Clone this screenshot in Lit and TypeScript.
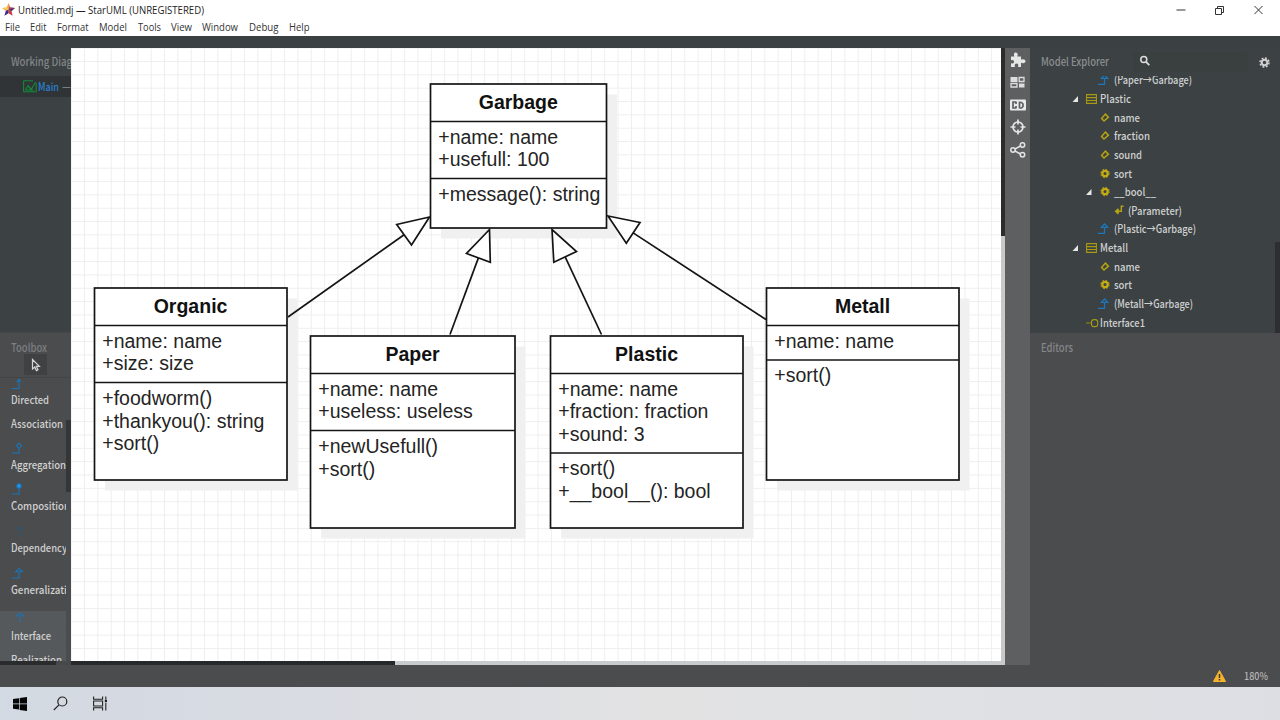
import { LitElement, html, svg, css } from "lit";
import { customElement } from "lit/decorators.js";

type Box = {
  x: number; y: number; w: number; h: number; name: string;
  attrs: string[]; ops: string[]; d1: number; d2: number;
};

const boxes: Box[] = [
  { x: 430.5, y: 84, w: 176, h: 144, name: "Garbage", attrs: ["+name: name", "+usefull: 100"], ops: ["+message(): string"], d1: 37.5, d2: 94.5 },
  { x: 94.5, y: 288, w: 192.5, h: 192, name: "Organic", attrs: ["+name: name", "+size: size"], ops: ["+foodworm()", "+thankyou(): string", "+sort()"], d1: 37.5, d2: 94.5 },
  { x: 310.5, y: 336, w: 204.5, h: 192, name: "Paper", attrs: ["+name: name", "+useless: useless"], ops: ["+newUsefull()", "+sort()"], d1: 37.5, d2: 94.5 },
  { x: 550.5, y: 336, w: 192.5, h: 192, name: "Plastic", attrs: ["+name: name", "+fraction: fraction", "+sound: 3"], ops: ["+sort()", "+__bool__(): bool"], d1: 37.5, d2: 117 },
  { x: 766.5, y: 288, w: 192.5, h: 192, name: "Metall", attrs: ["+name: name"], ops: ["+sort()"], d1: 37.5, d2: 72 },
];

const arrows = [
  { tip: [429.5, 217], a: [396.7, 224.5], b: [411.5, 245], from: [288, 317] },
  { tip: [489.5, 229.5], a: [466.5, 253.5], b: [490.3, 262.3], from: [450, 334.5] },
  { tip: [552, 229.5], a: [553.8, 262.3], b: [576.5, 251.5], from: [601.5, 334.5] },
  { tip: [608, 216], a: [640, 222.5], b: [626.3, 243.3], from: [766, 319.5] },
];

const boxView = (b: Box) => svg`
  <rect x=${b.x + 10.5} y=${b.y + 10.5} width=${b.w} height=${b.h} fill="#f0f0f0"/>
  <rect x=${b.x} y=${b.y} width=${b.w} height=${b.h} fill="#fff" class="ink"/>
  <path class="ink" d="M${b.x} ${b.y + b.d1}h${b.w}M${b.x} ${b.y + b.d2}h${b.w}"/>
  <text class="cls" x=${b.x + b.w / 2 - 0.2} y=${b.y + 24.7} text-anchor="middle">${b.name}</text>
  ${b.attrs.map((t, i) => svg`<text class="mem" x=${b.x + 7.8} y=${b.y + 59.7 + i * 22.6}>${t}</text>`)}
  ${b.ops.map((t, i) => svg`<text class="mem" x=${b.x + 7.8} y=${b.y + b.d2 + 22.4 + i * 22.6}>${t}</text>`)}`;

const arrowView = (r: { tip: number[]; a: number[]; b: number[]; from: number[] }) => svg`
  <path class="ink" d="M${(r.a[0] + r.b[0]) / 2} ${(r.a[1] + r.b[1]) / 2}L${r.from[0]} ${r.from[1]}"/>
  <path class="ink" fill="#fff" d="M${r.tip[0]} ${r.tip[1]}L${r.a[0]} ${r.a[1]}L${r.b[0]} ${r.b[1]}Z"/>`;

const star = html`<svg viewBox="0 0 20 20" width="100%" height="100%">
  <path fill="#f4b22e" d="M10 0L7.3 6.8 0 7.6 5.8 12 10 10.5z"/>
  <path fill="#e2552f" d="M10 0l2.6 6.8L10 10.5z"/>
  <path fill="#f9d55e" d="M0 7.6l7.3-.8L10 10.5z"/>
  <path fill="#3b2a6b" d="M20 7.6l-7.4-.8L10 10.5l4.5 2z"/>
  <path fill="#a13a5c" d="M20 7.6l-10 3 2.6-3.8z"/>
  <path fill="#cf3a3a" d="M16.3 19.6l-1.8-7.2L10 10.5v5.2z"/>
  <path fill="#43298c" d="M3.8 19.6l2-7.6L10 10.5v5.2z"/>
</svg>`;

const glyphs: Record<string, unknown> = {
  attr: svg`<path d="M6 2.2l3 3-4.4 3.9-2.4-2.6z" transform="translate(-.6 -.6)" stroke="#b5a410" stroke-width="1.5" fill="none"/>`,
  op: svg`<circle cx="5" cy="5" r="2.7" fill="none" stroke="#c4ac12" stroke-width="2.3"/><circle cx="5" cy="5" r="4.2" fill="none" stroke="#c4ac12" stroke-width="1" stroke-dasharray="1.7 1.6"/>`,
  param: svg`<path d="M9.5 .8H7.3V5.8H2M4.4 3.3L1.6 5.8l2.8 2.6M4.2 4v3.5" stroke="#b5a410" stroke-width="1.4" fill="none"/>`,
  cls: svg`<path d="M.6 .6h9.8v8.8H.6zM.6 3.6h9.8M.6 6.5h9.8" stroke="#a89a12" stroke-width="1.1" fill="none"/>`,
  iface: svg`<path d="M0 5h5.5" stroke="#8d8217" stroke-width="1.1"/><rect x="5.5" y="1.6" width="6.2" height="7" rx="2.4" fill="none" stroke="#a89a12" stroke-width="1.1"/>`,
  gen: svg`<path d="M0 10.4h7.5V4.5M4.4 4.4L7.6 1l3.2 3.4z" stroke="#1b78bd" stroke-width="1.2" fill="none"/>`,
};

const tree = [
  { pad: 71, icon: "gen", text: "(Paper→Garbage)", w: 78 },
  { pad: 57, icon: "cls", text: "Plastic", open: true, w: 31 },
  { pad: 71, icon: "attr", text: "name", w: 26 },
  { pad: 71, icon: "attr", text: "fraction", w: 36 },
  { pad: 71, icon: "attr", text: "sound", w: 28 },
  { pad: 71, icon: "op", text: "sort", w: 18 },
  { pad: 71, icon: "op", text: "__bool__", open: true, w: 42 },
  { pad: 84.5, icon: "param", text: "(Parameter)", w: 54 },
  { pad: 71, icon: "gen", text: "(Plastic→Garbage)", w: 82 },
  { pad: 57, icon: "cls", text: "Metall", open: true, w: 28 },
  { pad: 71, icon: "attr", text: "name", w: 26 },
  { pad: 71, icon: "op", text: "sort", w: 18 },
  { pad: 71, icon: "gen", text: "(Metall→Garbage)", w: 79 },
  { pad: 57, icon: "iface", text: "Interface1", w: 45 },
];

// Single-line label fitted to a fixed advance width.
const label = (text: string, w: number, size: number, fill: string, font: "ui" | "win" = "ui", h = 18) =>
  html`<svg class="label ${font}" width=${w + 2} height=${h} font-size=${size}><text x="0" y=${h / 2 + size * 0.35} fill=${fill} textLength=${w} lengthAdjust="spacingAndGlyphs">${text}</text></svg>`;

const relIcon = (kind: string) => html`<svg class="rel" width="14" height="12" viewBox="0 0 14 12">
  <g stroke="#1b74b8" fill="none" stroke-width="1.1">
  ${kind === "directed" ? svg`<path d="M1 10.5h7V1.5M5.5 3.8L8 1.3l2 2.2"/>` : ""}
  ${kind === "aggregation" ? svg`<path d="M1 11h7V6.5M8 1l2.4 2.8L8 6.6 5.6 3.8z"/>` : ""}
  ${kind === "composition" ? svg`<path d="M1 11h7V4"/><circle cx="8" cy="3" r="2.2" fill="#2796e8"/>` : ""}
  ${kind === "dependency" ? svg`<path stroke="#23577c" d="M9 11V2M6 4.6L9 1.8l3 2.8" stroke-dasharray="3 1"/>` : ""}
  ${kind === "generalization" ? svg`<path d="M1 11h7V5M4.6 4.8h7L8.1 1.4z"/>` : ""}
  ${kind === "realization" ? svg`<path d="M5.6 5h7L9 1.8zM9 6v6" stroke-dasharray="5 1.2"/>` : ""}
  </g></svg>`;

const tools: { kind: string; lines: [string, number][]; cls: string }[] = [
  { kind: "directed", lines: [["Directed", 38], ["Association", 52]], cls: "t0" },
  { kind: "aggregation", lines: [["Aggregation", 55]], cls: "t1" },
  { kind: "composition", lines: [["Composition", 59]], cls: "t1" },
  { kind: "dependency", lines: [["Dependency", 56]], cls: "t1" },
  { kind: "generalization", lines: [["Generalization", 68]], cls: "t1" },
  { kind: "realization", lines: [["Interface", 40], ["Realization", 51]], cls: "t2" },
];

@customElement("app-root")
export class AppRoot extends LitElement {
  static styles = css`
    :host { display: flex; flex-direction: column; width: 1280px; height: 720px; overflow: hidden; background: #fff; font-family: "Noto Sans CJK SC", "Open Sans", sans-serif; }
    * { box-sizing: border-box; }
    svg { display: block; flex: none; }
    .label { overflow: visible; }
    .ui { font-family: "Noto Sans CJK SC", sans-serif; font-weight: 500; }
    .win { font-family: "Open Sans", "Noto Sans", sans-serif; }
    .title { height: 19px; display: flex; align-items: center; padding-left: 2px; background: #fff; flex: none; }
    .logo { width: 13px; height: 13px; margin-right: 3px; }
    .winctl { margin-left: auto; margin-right: 15px; }
    .menu { height: 17px; display: flex; align-items: center; background: #fff; flex: none; padding-left: 5px; }
    .menu .label { margin-right: 8.4px; }
    .topbar { height: 12px; background: #3b4042; flex: none; }
    .work { height: 617px; display: grid; grid-template-columns: 71px 934px 25px 250px; flex: none; background: #3b4042; }
    .left { display: flex; flex-direction: column; overflow: hidden; background: #3c4143; min-width: 0; height: 617px; }
    .wd { height: 28px; padding: 5px 0 0 11px; flex: none; }
    .main { height: 21px; background: #303436; display: flex; align-items: center; padding-left: 23px; gap: 1px; flex: none; }
    .toolbox { margin-top: 235px; flex: 1; display: grid; grid-template-columns: 66px 5px; grid-template-rows: 46px 283px 4px; background: #4b4c4e; }
    .tbhead { grid-column: 1 / 3; padding: 6px 0 0 11px; border-bottom: 1px solid #434446; border-top: 1px solid #454749; }
    .pick { width: 23px; height: 21px; background: #404143; margin: -3px 0 0 13px; padding: 4px 0 0 7px; }
    .items { overflow: hidden; height: 283px; }
    .item { padding-left: 11px; height: 41.7px; }
    .item .label { overflow: visible; }
    .t0 { height: 63.5px; }
    .t2 { height: 62px; background: #56595c; margin-top: -1px; }
    .rel { height: 12px; }
    .t0 .label { margin-top: 1px; height: 22.5px; }
    .t1 .label { margin-top: 2px; }
    .t1 .rel { margin-top: 0; }
    .t2 .rel { margin-top: 4px; }
    .t2 .label { margin-top: 4px; height: 19.5px; }
    .vtrack { padding-top: 42px; background: #4b4c4e; }
    .vthumb { height: 72px; background: #343638; }
    .lh { grid-column: 1 / 3; background: #46484a; }
    .lh div { width: 56px; height: 4px; background: #292b2c; }
    .canvas { display: grid; grid-template-columns: 930px 4px; grid-template-rows: 613px 4px; }
    .vs { background: #c9c9c9; }
    .vs div { height: 188px; background: #2c2c2d; }
    .hs { grid-column: 1 / 3; background: #c9cacb; }
    .hs div { width: 324px; height: 4px; background: #26282a; }
    .ink { stroke: #141414; stroke-width: 1.7; }
    .cls { font: bold 19.5px "Liberation Sans", Arial, sans-serif; fill: #111; }
    .mem { font: 19.5px "Liberation Sans", Arial, sans-serif; fill: #242424; }
    .strip { background: #5e5f61; display: flex; flex-direction: column; align-items: center; padding-top: 4px; gap: 6.4px; }
    .right { display: flex; flex-direction: column; min-width: 0; background: #3c4143; }
    .rhead { height: 28px; display: flex; align-items: center; padding: 0 10px 0 11px; flex: none; }
    .search { width: 115px; height: 20px; margin-left: 22px; background: #3a3f40; border-radius: 4px; padding: 3px 0 0 6px; }
    .gear { margin-left: auto; }
    .tree { height: 256.5px; overflow: hidden; display: grid; grid-template-columns: 245px 5px; flex: none; }
    .rows { margin-top: -5px; }
    .row { height: 18.65px; display: flex; align-items: center; }
    .tw { width: 7px; margin-right: 0; }
    .ic { width: 13px; display: flex; justify-content: flex-end; }
    .rthumb { margin-top: 166px; height: 91px; background: #2c2e30; }
    .editors { flex: 1; background: #4b4c4e; padding: 6px 0 0 11px; }
    .status { height: 22px; background: #4b4c4e; flex: none; display: flex; align-items: center; justify-content: flex-end; padding-right: 10px; gap: 18px; }
    .bar { height: 33px; flex: none; display: flex; background: linear-gradient(90deg, #d3d9e2 0, #d9dce2 330px, #e2e2e3 650px, #e0e1e3 900px, #dcdee4 1280px); }
    .app { width: 41.3px; height: 33px; display: flex; justify-content: center; align-items: center; border-bottom: 0 solid #0f70c4; flex: none; }
    .start { width: 40px; }
    .search-b { width: 40px; }
    .tv { width: 40px; }
    .gap { width: 4px; }
    .run { border-bottom-width: 3px; border-image: linear-gradient(90deg, transparent 3.5px, #0f70c4 3.5px, #0f70c4 calc(100% - 3.5px), transparent calc(100% - 3.5px)) 3; }
    .alert { background: #f8ad78; border-bottom: 3px solid #f0730a; }
    .active { background: linear-gradient(#f4f4f5, #f4f4f5); }
    .tray { margin-left: auto; display: flex; align-items: center; height: 33px; }
    .clock { width: 48px; display: flex; flex-direction: column; align-items: center; margin: 0 17px 0 12px; }
    .sp { width: 20px; display: flex; justify-content: center; }
    .lang { margin-left: 6px; }
    .peek { width: 1px; height: 33px; background: #b5b8bf; margin-left: 16px; margin-right: 3px; }
  `;

  private menu: [string, number][] = [["File", 15], ["Edit", 16.5], ["Format", 31.5], ["Model", 28], ["Tools", 23], ["View", 21], ["Window", 36], ["Debug", 29.5], ["Help", 20.5]];

  render() {
    return html`
      <div class="title"><div class="logo">${star}</div>${label("Untitled.mdj — StarUML (UNREGISTERED)", 186, 10, "#222", "win")}
        <svg class="winctl" width="90" height="14" viewBox="0 0 90 14"><g stroke="#333" fill="none"><path d="M1.5 7h9"/><path d="M40.500 5.500h6v6h-6zM42.500 5.500v-2h6v6h-2"/><path d="M79.500 3l8 8m0-8l-8 8"/></g></svg></div>
      <div class="menu">${this.menu.map(([t, w]) => label(t, w, 10, "#333", "win", 17))}</div>
      <div class="topbar"></div>
      <div class="work">
        ${this.left()}
        <div class="canvas">
          <svg width="930" height="613" viewBox="71 48 930 613">
            <defs><pattern id="grid" x="84.000" y="61.000" width="13.340" height="13.340" patternUnits="userSpaceOnUse"><path d="M.5 0V13.340M0 .5H13.340" stroke="#eeeeee" stroke-width="1" fill="none"/></pattern></defs>
            <rect x="71" y="48" width="930" height="613" fill="#fff"/>
            <rect x="71" y="48" width="930" height="613" fill="url(#grid)"/>
            ${boxes.map(boxView)}${arrows.map(arrowView)}
          </svg>
          <div class="vs"><div></div></div>
          <div class="hs"><div></div></div>
        </div>
        ${this.strip()}
        ${this.right()}
      </div>
      <div class="status">
        <svg width="13" height="12" viewBox="0 0 13 12"><path d="M6.500 .5L12.600 11.500H.4z" fill="#f5b32c" stroke="#f5b32c" stroke-linejoin="round"/><path d="M6.500 4v4m0 1v1.500" stroke="#3c3a30" stroke-width="1.500"/></svg>
        ${label("180%", 24, 10.5, "#b5b5b5")}
      </div>
      ${this.taskbar()}
    `;
  }

  private left() {
    return html`<div class="left">
      <div class="wd">${label("Working Diagrams", 84, 11.5, "#828687")}</div>
      <div class="main"><svg width="14" height="13" viewBox="0 0 14 13"><path d="M.6 .8h9.400M.6 .8v11h12.600V3M2.500 10L5 5.500l3 4.500 4.500-8M5 5.500l4 4.500M2.500 10h8" stroke="#118a38" fill="none" stroke-width="1.100"/></svg>
        ${label("Main", 21, 11, "#2b7fd0")}${label("— Model", 40, 11, "#8d9192")}</div>
      <div class="toolbox">
        <div class="tbhead">${label("Toolbox", 36, 11.5, "#7d7f81")}
          <div class="pick"><svg width="10" height="14" viewBox="0 0 10 14"><path d="M1.500 1.500v9.500l2.300-2 1.600 3.600 1.600-.8-1.600-3.400h3z" fill="none" stroke="#d5d5d5" stroke-width="1.200"/></svg></div></div>
        <div class="items">${tools.map(t => html`<div class="item ${t.cls}">${relIcon(t.kind)}${t.lines.map(([s, w]) => label(s, w, 11, "#d0d0d0"))}</div>`)}</div>
        <div class="vtrack"><div class="vthumb"></div></div>
        <div class="lh"><div></div></div>
      </div></div>`;
  }

  private strip() {
    return html`<div class="strip">
      <svg width="16" height="16" viewBox="0 0 16 16"><path fill="#e6e6e6" d="M1 4.500h3.300C3.300 1.500 4.500.5 5.800.5s2.500 1.200 1.500 4H11v3.200c2.500-1 4.500 0 4.500 1.600s-1.700 2.400-4.500 1.500V15H8c.8-2.300-.2-3.400-1.500-3.400S4.300 12.800 5 15H1v-3.700c2.400.6 3-.5 3-1.600s-.9-2-3-1.400z"/></svg>
      <svg width="15" height="16" viewBox="0 0 15 16"><path fill="#ddd" d="M.5 3h7v5h-7zM9 9.500h5.500v4H9z"/><path fill="none" stroke="#ddd" stroke-width="1.300" d="M9.200 3.500h4.800v4H9.200zM1 9.500h6v3.500H1z"/></svg>
      <svg width="16" height="16" viewBox="0 0 16 16"><rect x="0" y="2.500" width="16" height="11" rx="1" fill="#eaeaea"/><path d="M6 5H3v6h3M6 4.500V7m0 2v2.500M9.500 4.500v7M10 5.500h1.500l1.500 1.500v2.500L11.500 11H10" stroke="#5e5f61" stroke-width="1.700" fill="none"/></svg>
      <svg width="16" height="16" viewBox="0 0 16 16"><circle cx="8" cy="8" r="5" fill="none" stroke="#e4e4e4" stroke-width="1.700"/><path d="M8 .5v5m0 5v5M.5 8h5m5 0h5" stroke="#e4e4e4" stroke-width="1.700"/></svg>
      <svg width="16" height="16" viewBox="0 0 16 16"><g fill="none" stroke="#e4e4e4" stroke-width="1.500"><circle cx="3" cy="8" r="2.200"/><circle cx="12.500" cy="3" r="2.200"/><circle cx="12.500" cy="12.800" r="2.200"/><path d="M5 7l5.500-3M5 9l5.500 3"/></g></svg>
    </div>`;
  }

  private right() {
    return html`<div class="right">
      <div class="rhead">${label("Model Explorer", 68, 11.5, "#8b8f90")}
        <div class="search"><svg width="11" height="12" viewBox="0 0 11 12"><circle cx="4.800" cy="4.500" r="3" fill="none" stroke="#ddd" stroke-width="1.500"/><path d="M7 6.800l3.300 3.400" stroke="#ddd" stroke-width="1.700"/></svg></div>
        <svg class="gear" width="11" height="11" viewBox="0 0 11 11"><circle cx="5.500" cy="5.500" r="2.800" fill="none" stroke="#d0d0d0" stroke-width="2"/><circle cx="5.500" cy="5.500" r="4.500" fill="none" stroke="#d0d0d0" stroke-width="1.500" stroke-dasharray="1.900 1.630"/></svg>
      </div>
      <div class="tree"><div class="rows">${tree.map(r => {
        const wide = r.icon === "cls" || r.icon === "iface";
        const twist = 43 + (r.pad > 60 ? 13.5 : 0);
        return html`<div class="row"><svg width=${r.pad + (wide ? -1 : -3)} height="18" viewBox="0 0 ${r.pad + (wide ? -1 : -3)} 18">${r.open ? svg`<path fill="#e6e6e6" d="M${twist + 5} 6v6h-5.500z"/>` : ""}</svg>
          <svg width=${wide ? 14 : 16} height="12" viewBox="${r.icon === "cls" ? "0 -1 14 12" : r.icon === "iface" ? "0 -1 14 12" : r.icon === "gen" ? "1 0 16 12" : "-2 -.500 16 12"}">${glyphs[r.icon]}</svg>
          ${label(r.text, r.w, 11, "#cfd1d1")}</div>`; })}</div>
        <div class="rthumb"></div></div>
      <div class="editors">${label("Editors", 32, 11.5, "#85878a")}</div>
    </div>`;
  }

  private taskbar() {
    return html`<div class="bar">
      <div class="app start"><svg width="14" height="14" viewBox="0 0 14 14"><path d="M0 2l6-.8v5.400H0zM6.700 1L14 0v6.600H6.700zM0 7.300h6v5.300L0 11.800zM6.700 7.300H14V14l-7.300-1z" fill="#050505"/></svg></div>
      <div class="app search-b"><svg width="15" height="15" viewBox="0 0 15 15"><circle cx="9.300" cy="5.500" r="4.500" fill="none" stroke="#222" stroke-width="1.200"/><path d="M6 8.800L.8 14" stroke="#222" stroke-width="1.200"/></svg></div>
      <div class="app tv"><svg width="15" height="15" viewBox="0 0 15 15"><path d="M.6 .5v2.800h9V.5M.6 14.500v-2.800h9v2.800M.6 5h9v5h-9zM12.800 .5v3m0 3.500v7.500" stroke="#222" fill="none" stroke-width="1.100"/><path d="M11.800 3.700h2.200v2.500h-2.200z" fill="#222"/></svg></div>
      <div class="gap"></div>
      <div class="app start tv"></div>
      ${""}
    </div>`.strings ? this.bar() : "";
  }

  private bar() {
    return html`<div class="bar">
      <div class="app start"><svg width="14" height="14" viewBox="0 0 14 14"><path d="M0 2l6-.8v5.400H0zM6.700 1L14 0v6.600H6.700zM0 7.300h6v5.300L0 11.800zM6.700 7.300H14V14l-7.300-1z" fill="#050505"/></svg></div>
      <div class="app search-b"><svg width="15" height="15" viewBox="0 0 15 15"><circle cx="9.300" cy="5.500" r="4.500" fill="none" stroke="#222" stroke-width="1.200"/><path d="M6 8.800L.8 14" stroke="#222" stroke-width="1.200"/></svg></div>
      <div class="app tv"><svg width="15" height="15" viewBox="0 0 15 15"><path d="M.6 .5v2.800h9V.5M.6 14.500v-2.800h9v2.800M.6 5h9v5h-9zM12.800 .5v3m0 3.500v7.500" stroke="#222" fill="none" stroke-width="1.100"/><path d="M11.800 3.700h2.200v2.500h-2.200z" fill="#222"/></svg></div>
    </div>`;
  }
}
